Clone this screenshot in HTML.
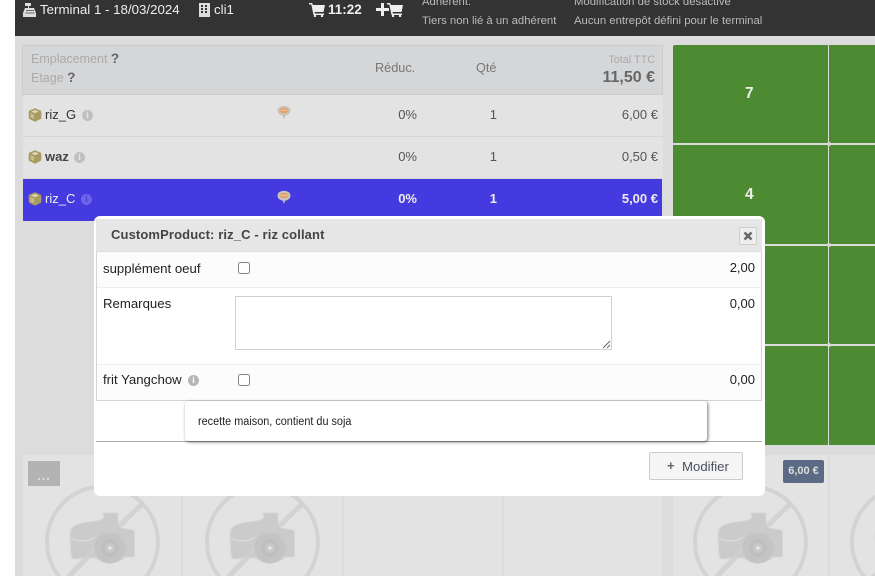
<!DOCTYPE html>
<html><head><meta charset="utf-8">
<style>
html,body{margin:0;padding:0;background:#fff;overflow:hidden}
#p{position:relative;width:875px;height:576px;overflow:hidden;font-family:"Liberation Sans",sans-serif;background:#fff}
#p div,#p svg,#p span.a{position:absolute}
.t{white-space:nowrap;line-height:16px}
.g{background:#4c8b31}
.tile{background:#e3e3e3;top:455px;height:121px}
.r{text-align:right}
.info{width:11px;height:11px;border-radius:50%;background:#c0c0c0;color:#e6e6e6;font:bold 9px/11px "Liberation Serif",serif;text-align:center}
.cb{width:10px;height:10px;border:1px solid #858585;border-radius:2.500px;background:#fff}
.dot{width:4px;height:4px;border-radius:50%;background:#d4d8d0}
</style></head><body>
<div id="p">
<svg width="0" height="0" style="position:absolute"><defs>
<symbol id="cart" viewBox="0 0 16 14"><path fill="#eee" d="M0 0h3l1 2h12l-1.500 7H5.500L6 10.500h9V12H4.500L2.300 1.500H0z"/><circle cx="6" cy="13" r="1.200" fill="#eee"/><circle cx="13" cy="13" r="1.200" fill="#eee"/></symbol>
<symbol id="box" viewBox="0 0 14 14"><path fill="#a99b5f" d="M7 .3l6 2.500c.5 2.500.5 5.500 0 8L7 13.700 1 10.800c-.5-2.500-.5-5.500 0-8z"/><path fill="#dcd8bd" d="M7 2L10.800 3.500 7 5.200 3.200 3.500z"/><path fill="#c4bb90" d="M2.500 5l3.600 1.700v4.600L2.500 9.500z"/></symbol>
<symbol id="bubble" viewBox="0 0 14 14"><ellipse cx="7" cy="5.200" rx="6.500" ry="5" fill="#c9c3bb"/><ellipse cx="7" cy="5" rx="4.500" ry="2.800" fill="#e0a06a"/><path d="M3.500 4.700h7" stroke="#efd9c4" stroke-width=".7"/><path d="M5.500 10l1.500 3.500L8.200 10z" fill="#bdb6ae"/></symbol>
<symbol id="nocam" viewBox="0 0 120 120">
<circle cx="60.500" cy="60" r="55.500" fill="none" stroke="#d3d3d3" stroke-width="4"/>
<path d="M21 100L100 22" stroke="#d3d3d3" stroke-width="5"/>
<path fill="#cbcbcb" stroke="#d6d6d6" stroke-width="1" d="M61 31h15v9l3 6 12 2c1 0 1.500 1 1.500 2v23c0 1-.5 2-2 2H83c-5 7-22 8-29 1H42l-9 1c-3 0-4-2-4-4l-1-20c0-4 1-7 4-9 5-3 14-4 22-5l5-1 3-3z"/>
<path d="M28 56c8 4 18 4 25-1" fill="none" stroke="#d9d9d9" stroke-width="1.500"/>
<path d="M30 88L92 28" stroke="#d3d3d3" stroke-width="3" opacity=".45"/>
<circle cx="68" cy="66" r="15.500" fill="#c4c4c4"/>
<circle cx="68" cy="66" r="9" fill="#bfbfbf"/>
<circle cx="68" cy="66" r="5" fill="#c8c8c8"/>
<circle cx="68" cy="66" r="1.800" fill="#e4e4e4"/>
</symbol>
</defs></svg>

<!-- page bg -->
<div style="left:15px;top:36px;width:860px;height:540px;background:#dcdcdc"></div>
<!-- header -->
<div style="left:15px;top:0;width:860px;height:36px;background:#333"></div>
<svg style="left:23px;top:3px" width="14" height="14" viewBox="0 0 14 14"><path fill="#ddd" d="M2 0h6v3H6v2h5l2 5v4H0v-4l2-5h3V3H2z"/><path stroke="#666" stroke-width="1" d="M3 7.500h8M2.500 10h9"/></svg>
<div class="t" style="left:40px;top:2px;font-size:13.300px;color:#eee">Terminal 1 - 18/03/2024</div>
<svg style="left:199px;top:3px" width="11" height="14" viewBox="0 0 11 14"><path fill="#ddd" d="M0 0h11v14H0z"/><path fill="#333" d="M2 2h2v2H2zM6 2h2v2H6zM2 5h2v2H2zM6 5h2v2H6zM2 8h2v2H2zM6 8h2v2H6z"/></svg>
<div class="t" style="left:214px;top:2px;font-size:13.300px;color:#eee">cli1</div>
<svg style="left:309px;top:3px" width="16" height="14"><use href="#cart"/></svg>
<div class="t" style="left:328px;top:2px;font-size:13.500px;font-weight:bold;color:#eee">11:22</div>
<svg style="left:376px;top:3px" width="13" height="13" viewBox="0 0 13 13"><path fill="#eee" d="M5 0h3v5h5v3H8v5H5V8H0V5h5z"/></svg>
<svg style="left:387px;top:3px" width="16" height="14"><use href="#cart"/></svg>
<div class="t" style="left:422px;top:-6px;font-size:11.330px;color:#bbb">Adhérent:</div>
<div class="t" style="left:422px;top:13px;font-size:11.330px;color:#bbb">Tiers non lié à un adhérent</div>
<div class="t" style="left:574px;top:-6px;font-size:11.330px;color:#bbb">Modification de stock désactivé</div>
<div class="t" style="left:574px;top:13px;font-size:11.330px;color:#bbb">Aucun entrepôt défini pour le terminal</div>

<!-- ticket -->
<div style="left:22px;top:45px;width:641px;height:50px;background:#d5d6d8;box-shadow:inset 0 0 0 1px #ccc"></div>
<div class="t" style="left:31px;top:51px;font-size:12.500px;color:#aaa">Emplacement <b style="color:#666;font-size:13.500px">?</b></div>
<div class="t" style="left:31px;top:70px;font-size:12.500px;color:#aaa">Etage <b style="color:#666;font-size:13.500px">?</b></div>
<div class="t" style="left:375px;top:60px;font-size:12.700px;color:#777">Réduc.</div>
<div class="t" style="left:476px;top:60px;font-size:12.700px;color:#777">Qté</div>
<div class="t r" style="left:555px;width:100px;top:52px;font-size:10.800px;color:#aaa">Total TTC</div>
<div class="t r" style="left:555px;width:100px;top:70px;font-size:16px;font-weight:bold;color:#666">11,50 €</div>

<div style="left:23px;top:95px;width:640px;height:41px;background:#e3e3e3"></div>
<div style="left:23px;top:136px;width:640px;height:1px;background:#d6d6d6"></div>
<div style="left:23px;top:137px;width:640px;height:41px;background:#e3e3e3"></div>
<div style="left:23px;top:178px;width:640px;height:1px;background:#d6d6d6"></div>
<div style="left:23px;top:179px;width:639px;height:42px;background:#443adf"></div>

<svg style="left:28px;top:108px" width="14" height="14"><use href="#box"/></svg>
<div class="t" style="left:45px;top:107px;font-size:13px;color:#333">riz_G</div>
<div class="info" style="left:82px;top:110px">i</div>
<svg style="left:277px;top:105px" width="14" height="15"><use href="#bubble"/></svg>
<div class="t r" style="left:357px;width:60px;top:107px;font-size:13px;color:#555">0%</div>
<div class="t r" style="left:437px;width:60px;top:107px;font-size:13px;color:#555">1</div>
<div class="t r" style="left:578px;width:80px;top:107px;font-size:13px;color:#555">6,00 €</div>

<svg style="left:28px;top:150px" width="14" height="14"><use href="#box"/></svg>
<div class="t" style="left:45px;top:149px;font-size:13px;font-weight:bold;color:#444">waz</div>
<div class="info" style="left:74px;top:152px">i</div>
<div class="t r" style="left:357px;width:60px;top:149px;font-size:13px;color:#555">0%</div>
<div class="t r" style="left:437px;width:60px;top:149px;font-size:13px;color:#555">1</div>
<div class="t r" style="left:578px;width:80px;top:149px;font-size:13px;color:#555">0,50 €</div>

<svg style="left:28px;top:192px" width="14" height="14"><use href="#box"/></svg>
<div class="t" style="left:45px;top:191px;font-size:13px;color:#eee">riz_C</div>
<div class="info" style="left:81px;top:194px;background:#6c66e6;color:#443adf">i</div>
<svg style="left:277px;top:190px" width="14" height="15"><use href="#bubble"/></svg>
<div class="t r" style="left:357px;width:60px;top:191px;font-size:13px;font-weight:bold;color:#eee">0%</div>
<div class="t r" style="left:437px;width:60px;top:191px;font-size:13px;font-weight:bold;color:#eee">1</div>
<div class="t r" style="left:578px;width:80px;top:191px;font-size:13px;font-weight:bold;color:#eee">5,00 €</div>

<!-- green buttons -->
<div class="g" style="left:673px;top:45px;width:155px;height:98px;border-radius:2px 0 0 0"></div>
<div class="g" style="left:829px;top:45px;width:46px;height:98px"></div>
<div class="g" style="left:673px;top:145px;width:155px;height:99px"></div>
<div class="g" style="left:829px;top:145px;width:46px;height:99px"></div>
<div class="g" style="left:673px;top:246px;width:155px;height:98px"></div>
<div class="g" style="left:829px;top:246px;width:46px;height:98px"></div>
<div class="g" style="left:673px;top:346px;width:155px;height:99px"></div>
<div class="g" style="left:829px;top:346px;width:46px;height:99px"></div>
<div class="dot" style="left:826.500px;top:142px"></div>
<div class="dot" style="left:826.500px;top:243px"></div>
<div class="dot" style="left:826.500px;top:343px"></div>
<div class="t" style="left:745px;top:86px;font-size:15.500px;font-weight:bold;color:#eee">7</div>
<div class="t" style="left:745px;top:187px;font-size:15.500px;font-weight:bold;color:#eee">4</div>

<!-- bottom tiles -->
<div class="tile" style="left:23px;width:158px"></div>
<div class="tile" style="left:183px;width:159px"></div>
<div class="tile" style="left:344px;width:158px"></div>
<div class="tile" style="left:504px;width:158px"></div>
<div class="tile" style="left:673px;width:155px"></div>
<div class="tile" style="left:830px;width:45px"></div>
<svg style="left:42px;top:482px" width="120" height="94"><use href="#nocam" width="120" height="120"/></svg>
<svg style="left:202px;top:482px" width="120" height="94"><use href="#nocam" width="120" height="120"/></svg>
<svg style="left:690px;top:482px" width="120" height="94"><use href="#nocam" width="120" height="120"/></svg>
<svg style="left:847px;top:482px" width="28" height="94"><use href="#nocam" width="120" height="120"/></svg>
<div style="left:28px;top:461px;width:32px;height:25px;background:#b3b3b3;color:#ddd;font:bold 13px/30px 'Liberation Sans',sans-serif;letter-spacing:1px;text-align:center">...</div>
<div style="left:783px;top:460px;width:41px;height:23px;background:#5b6a85;border-radius:2px;color:#ddd;font:bold 11px/23px 'Liberation Sans',sans-serif;text-align:center">6,00 €</div>

<!-- modal -->
<div style="left:94px;top:216px;width:671px;height:280px;background:#fff;border-radius:6px"></div>
<div style="left:96px;top:219px;width:666px;height:182px;border:1px solid #d5d5d5;border-width:0 1px 1px;box-sizing:border-box"></div>
<div style="left:96px;top:219px;width:666px;height:32px;background:#e6e6e6;border-bottom:1px solid #ddd;border-radius:4px 4px 0 0"></div>
<div class="t" style="left:111px;top:227px;font-size:13px;font-weight:bold;color:#444;letter-spacing:.12px">CustomProduct: riz_C - riz collant</div>
<div style="left:739px;top:227px;width:16px;height:16px;background:#eee;border:1px solid #ccc;border-radius:2px"></div>
<svg style="left:743px;top:231px" width="10" height="10" viewBox="0 0 10 10"><path d="M1.500 1.500l7 7M8.500 1.500l-7 7" stroke="#666" stroke-width="2.600"/></svg>

<div style="left:97px;top:252px;width:664px;height:35px;background:#fcfcfc"></div>
<div style="left:97px;top:287px;width:664px;height:1px;background:#eee"></div>
<div class="t" style="left:103px;top:261px;font-size:13.200px;color:#222">supplément oeuf</div>
<div class="cb" style="left:238px;top:262px"></div>
<div class="t r" style="left:695px;width:60px;top:260px;font-size:13px;color:#222">2,00</div>

<div class="t" style="left:103px;top:296px;font-size:13.200px;color:#222">Remarques</div>
<div style="left:235px;top:296px;width:377px;height:54px;border:1px solid #d0d0d0;box-sizing:border-box;background:#fff"></div>
<svg style="left:602px;top:340px" width="9" height="9" viewBox="0 0 9 9"><path d="M1 8L8 1M5 8l3-3" stroke="#666" stroke-width="1"/></svg>
<div class="t r" style="left:695px;width:60px;top:296px;font-size:13px;color:#222">0,00</div>

<div style="left:97px;top:364px;width:664px;height:1px;background:#eee"></div>
<div style="left:97px;top:365px;width:664px;height:35px;background:#fcfcfc"></div>
<div class="t" style="left:103px;top:372px;font-size:13.200px;color:#222">frit Yangchow</div>
<div class="info" style="left:188px;top:375px;width:11px;height:11px;background:#b5b5b5;color:#fff;line-height:11px">i</div>
<div class="cb" style="left:238px;top:374px"></div>
<div class="t r" style="left:695px;width:60px;top:372px;font-size:13px;color:#222">0,00</div>

<div style="left:96px;top:441px;width:666px;height:1px;background:#aaa"></div>
<div style="left:185px;top:401px;width:522px;height:40px;background:#fff;border-radius:3px;box-shadow:1px 1px 3px rgba(0,0,0,.55)"></div>
<div class="t" style="left:198px;top:414px;font-size:11.500px;color:#222;transform-origin:left;transform:scaleX(.945)">recette maison, contient du soja</div>

<div style="left:649px;top:452px;width:94px;height:28px;box-sizing:border-box;border:1px solid #ccc;border-radius:2px;background:#f5f5f5"></div>
<div class="t" style="left:667px;top:458px;font-size:13px;font-weight:bold;color:#666">+</div>
<div class="t" style="left:682px;top:459px;font-size:13.200px;color:#4a5160">Modifier</div>
</div>
</body></html>
